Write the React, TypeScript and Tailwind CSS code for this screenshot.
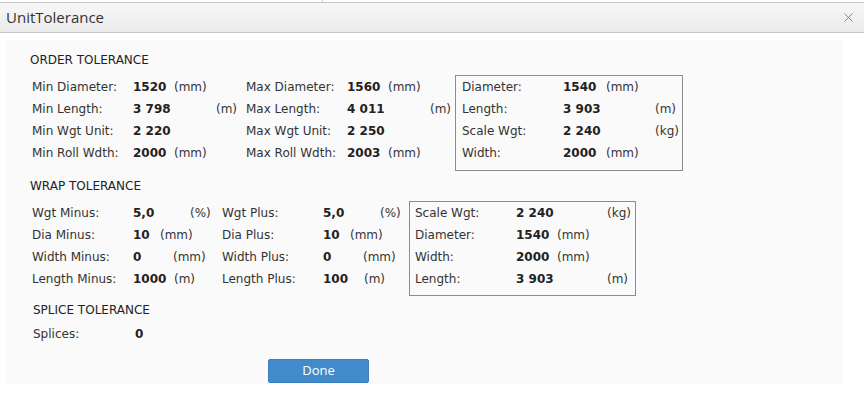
import { X } from "lucide-react";

type Row = {
  label: string;
  value: string;
  unit?: string;
  // width of the value cell, so the unit lands in the right column
  vw: number;
};

const orderMin: Row[] = [
  { label: "Min Diameter:", value: "1520", unit: "(mm)", vw: 41 },
  { label: "Min Length:", value: "3 798", unit: "(m)", vw: 83 },
  { label: "Min Wgt Unit:", value: "2 220", vw: 41 },
  { label: "Min Roll Wdth:", value: "2000", unit: "(mm)", vw: 41 },
];

const orderMax: Row[] = [
  { label: "Max Diameter:", value: "1560", unit: "(mm)", vw: 41 },
  { label: "Max Length:", value: "4 011", unit: "(m)", vw: 83 },
  { label: "Max Wgt Unit:", value: "2 250", vw: 41 },
  { label: "Max Roll Wdth:", value: "2003", unit: "(mm)", vw: 41 },
];

const orderActual: Row[] = [
  { label: "Diameter:", value: "1540", unit: "(mm)", vw: 43 },
  { label: "Length:", value: "3 903", unit: "(m)", vw: 92 },
  { label: "Scale Wgt:", value: "2 240", unit: "(kg)", vw: 92 },
  { label: "Width:", value: "2000", unit: "(mm)", vw: 43 },
];

const wrapMinus: Row[] = [
  { label: "Wgt Minus:", value: "5,0", unit: "(%)", vw: 57 },
  { label: "Dia Minus:", value: "10", unit: "(mm)", vw: 27 },
  { label: "Width Minus:", value: "0", unit: "(mm)", vw: 40 },
  { label: "Length Minus:", value: "1000", unit: "(m)", vw: 41 },
];

const wrapPlus: Row[] = [
  { label: "Wgt Plus:", value: "5,0", unit: "(%)", vw: 57 },
  { label: "Dia Plus:", value: "10", unit: "(mm)", vw: 27 },
  { label: "Width Plus:", value: "0", unit: "(mm)", vw: 40 },
  { label: "Length Plus:", value: "100", unit: "(m)", vw: 41 },
];

const wrapActual: Row[] = [
  { label: "Scale Wgt:", value: "2 240", unit: "(kg)", vw: 91 },
  { label: "Diameter:", value: "1540", unit: "(mm)", vw: 41 },
  { label: "Width:", value: "2000", unit: "(mm)", vw: 41 },
  { label: "Length:", value: "3 903", unit: "(m)", vw: 91 },
];

const Field = ({ row }: { row: Row }) => (
  <div className="flex h-[22px] items-center whitespace-nowrap">
    <span className="w-[101px] shrink-0 text-[#333]">{row.label}</span>
    <span className="shrink-0 font-bold text-[#222]" style={{ width: row.vw }}>
      {row.value}
    </span>
    {row.unit && <span className="text-[#333]">{row.unit}</span>}
  </div>
);

const Column = ({ rows, width }: { rows: Row[]; width: string }) => (
  <div className={`${width} shrink-0 pt-[1px]`}>
    {rows.map((r) => (
      <Field key={r.label} row={r} />
    ))}
  </div>
);

const Heading = ({ children }: { children: React.ReactNode }) => (
  <div className="h-[16px] leading-[16px] text-[#222]">{children}</div>
);

export default function App() {
  return (
    <div className="w-[864px] h-[404px] bg-white overflow-hidden font-['DejaVu_Sans',Verdana,sans-serif] text-[12px]">
      <div className="flex h-[2px]">
        <div className="ml-[322px] w-px h-full bg-[#d0d0d0]" />
      </div>
      <div className="flex h-[31px] items-center justify-between border-y border-[#c6c6c6] bg-linear-to-b from-[#f7f7f7] to-[#ebebeb] pl-[6px] pr-[8px]">
        <span className="font-['Open_Sans',sans-serif] text-[15px] text-[#333]">UnitTolerance</span>
        <X size={15} strokeWidth={1.6} className="text-[#8a8a8a]" />
      </div>

      <div className="mx-[6px] mt-[7px] w-[837px] bg-[#fafafa] pl-[24px] pt-[12px] pb-[1px]">
        <Heading>ORDER TOLERANCE</Heading>
        <div className="mt-[7px] ml-[2px] flex items-start">
          <Column rows={orderMin} width="w-[214px]" />
          <Column rows={orderMax} width="w-[209px]" />
          <div className="w-[228px] h-[96px] border border-[#8c8c8c] pl-[6px]">
            {orderActual.map((r) => (
              <Field key={r.label} row={r} />
            ))}
          </div>
        </div>

        <div className="mt-[7px]">
          <Heading>WRAP TOLERANCE</Heading>
        </div>
        <div className="mt-[7px] ml-[2px] flex items-start">
          <Column rows={wrapMinus} width="w-[190px]" />
          <Column rows={wrapPlus} width="w-[187px]" />
          <div className="w-[227px] h-[95px] border border-[#8c8c8c] pl-[5px]">
            {wrapActual.map((r) => (
              <Field key={r.label} row={r} />
            ))}
          </div>
        </div>

        <div className="mt-[6px] ml-[3px]">
          <Heading>SPLICE TOLERANCE</Heading>
          <div className="mt-[5px] flex h-[22px] items-center">
            <span className="w-[102px] text-[#333]">Splices:</span>
            <span className="font-bold text-[#222]">0</span>
          </div>
        </div>

        <div className="mt-[14px] flex">
          <button className="ml-[238px] h-[24px] w-[101px] rounded-[2px] border border-[#3b7fbf] bg-[#428bca] font-['Open_Sans',sans-serif] text-[13px] text-white">
            Done
          </button>
        </div>
      </div>
    </div>
  );
}
